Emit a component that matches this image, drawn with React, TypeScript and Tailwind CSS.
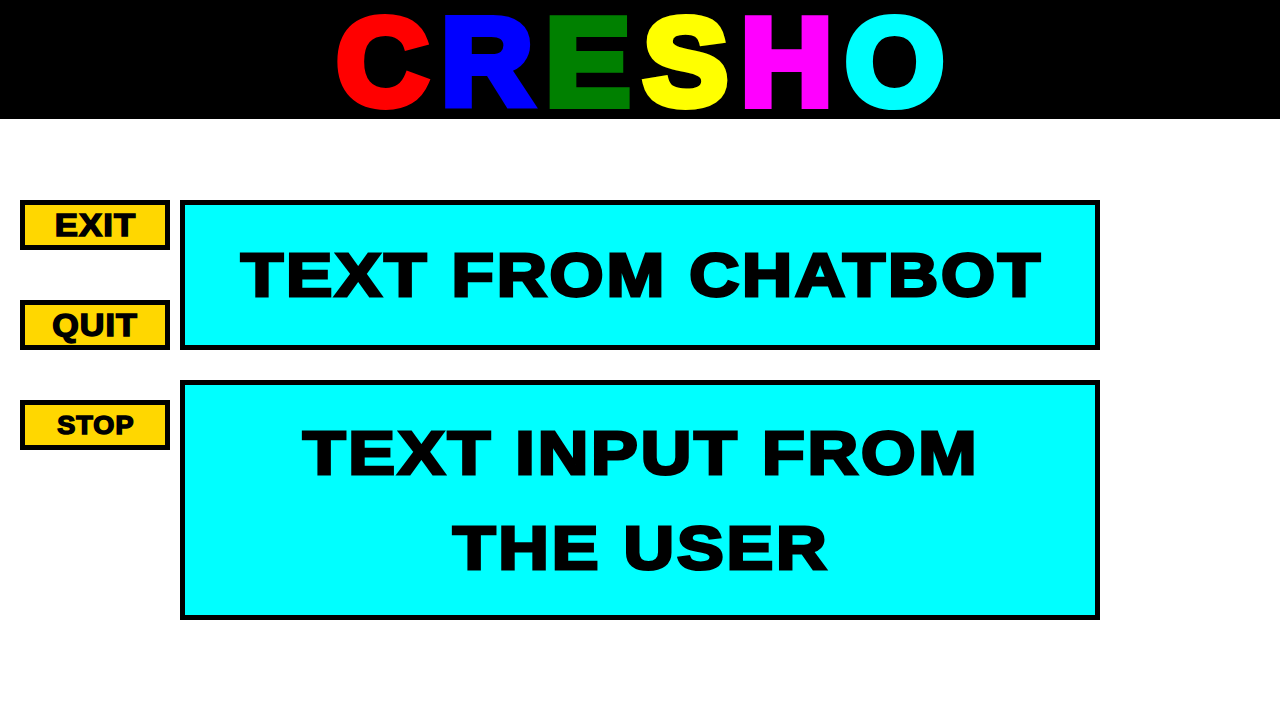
const letters = [
  { ch: "C", cls: "text-[#ff0000] [-webkit-text-stroke:8px_#ff0000]" },
  { ch: "R", cls: "text-[#0000ff] [-webkit-text-stroke:8px_#0000ff]" },
  { ch: "E", cls: "text-[#008000] [-webkit-text-stroke:8px_#008000]" },
  { ch: "S", cls: "text-[#ffff00] [-webkit-text-stroke:8px_#ffff00]" },
  { ch: "H", cls: "text-[#ff00ff] [-webkit-text-stroke:8px_#ff00ff]" },
  { ch: "O", cls: "text-[#00ffff] [-webkit-text-stroke:8px_#00ffff]" },
];

const heavy = "font-['Liberation_Sans',Arial,sans-serif] font-bold text-black";

function SideButton({ label, size }: { label: string; size: string }) {
  return (
    <button className="flex h-[50px] w-[150px] items-center justify-center border-[5px] border-black bg-[#ffd700]">
      <span className={`inline-block pl-[1px] leading-none tracking-[1px] [-webkit-text-stroke:1.5px_black] ${heavy} ${size}`}>
        {label}
      </span>
    </button>
  );
}

export default function App() {
  return (
    <div className="h-[720px] w-[1280px] bg-white">
      <header className="flex h-[119px] items-start justify-center bg-black">
        <h1 className="mt-[7px] flex scale-x-[1.03] pl-[12px] font-['Liberation_Sans',Arial,sans-serif] text-[124px] font-bold leading-[111px] tracking-[12px]">
          {letters.map((l) => (
            <span key={l.ch} className={`inline-block h-[111px] ${l.cls}`}>
              {l.ch}
            </span>
          ))}
        </h1>
      </header>

      <main className="flex gap-[10px] px-[20px] pt-[81px]">
        <div className="flex w-[150px] flex-col gap-[50px]">
          <SideButton label="EXIT" size="text-[31px] scale-x-[1.12]" />
          <SideButton label="QUIT" size="text-[31px] scale-x-[1.1]" />
          <SideButton label="STOP" size="text-[25px] scale-x-[1.08]" />
        </div>

        <div className="flex w-[920px] flex-col gap-[30px]">
          <div className="flex h-[150px] items-center justify-center border-[5px] border-black bg-[#00ffff]">
            <p className={`inline-block scale-x-[1.12] pl-[2.5px] text-[62px] leading-none tracking-[2.5px] [-webkit-text-stroke:3px_black] ${heavy}`}>
              TEXT FROM CHATBOT
            </p>
          </div>
          <div className="flex h-[240px] items-center justify-center border-[5px] border-black bg-[#00ffff]">
            <p className={`inline-block scale-x-[1.13] pl-[2.5px] text-center text-[62px] leading-[95px] tracking-[2.5px] [-webkit-text-stroke:3px_black] ${heavy}`}>
              TEXT INPUT FROM
              <br />
              THE USER
            </p>
          </div>
        </div>
      </main>
    </div>
  );
}
